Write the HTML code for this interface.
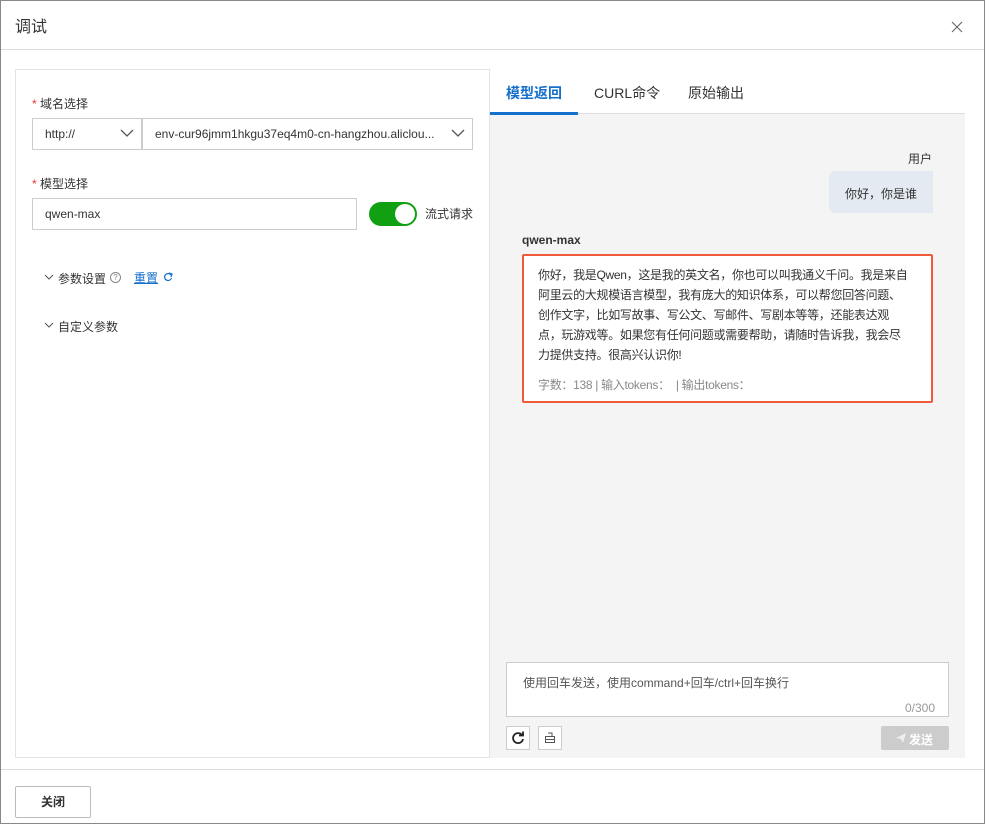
<!DOCTYPE html>
<html><head><meta charset="utf-8"><style>
*{box-sizing:border-box;margin:0;padding:0}
body{width:985px;height:824px;position:relative;background:#fff;font-family:"Liberation Sans","Noto Sans CJK SC",sans-serif;color:#333;font-size:12px;overflow:hidden}
.a{position:absolute}
.frame{left:0;top:0;width:985px;height:824px;border:1px solid #888}
</style></head><body>
<div class="a frame"></div>
<div class="a" style="left:15px;top:13px;font-size:16px;color:#333">调试</div>
<svg class="a" style="left:951px;top:21px" width="12" height="12"><path d="M1 1l10 10M11 1L1 11" stroke="#666" stroke-width="1.1"/></svg>
<div class="a" style="left:1px;top:49px;width:983px;height:1px;background:#ddd"></div>

<div class="a" style="left:15px;top:69px;width:475px;height:689px;border:1px solid #e3e3e3"></div>
<div class="a" style="left:32px;top:95px;font-size:12px"><span style="color:#e33">*</span> 域名选择</div>
<div class="a" style="left:32px;top:118px;width:110px;height:32px;border:1px solid #ccc;padding:8px 12px;font-size:12px">http://</div>
<svg class="a" style="left:120px;top:129px" width="14" height="9"><path d="M1 1l6 6 6-6" stroke="#555" fill="none" stroke-width="1.3"/></svg>
<div class="a" style="left:142px;top:118px;width:331px;height:32px;border:1px solid #ccc;padding:8px 12px;font-size:12px">env-cur96jmm1hkgu37eq4m0-cn-hangzhou.aliclou...</div>
<svg class="a" style="left:451px;top:129px" width="14" height="9"><path d="M1 1l6 6 6-6" stroke="#555" fill="none" stroke-width="1.3"/></svg>
<div class="a" style="left:32px;top:175px"><span style="color:#e33">*</span> 模型选择</div>
<div class="a" style="left:32px;top:198px;width:325px;height:32px;border:1px solid #ccc;padding:8px 12px">qwen-max</div>
<div class="a" style="left:369px;top:202px;width:48px;height:24px;border-radius:12px;background:#11a011"></div>
<div class="a" style="left:395px;top:204px;width:20px;height:20px;border-radius:10px;background:#fff"></div>
<div class="a" style="left:425px;top:205px">流式请求</div>
<svg class="a" style="left:44px;top:274px" width="10" height="7"><path d="M1 1l4 4 4-4" stroke="#555" fill="none"/></svg>
<div class="a" style="left:58px;top:270px">参数设置</div>
<div class="a" style="left:110px;top:272px;width:11px;height:11px;border:1px solid #888;border-radius:50%;font-size:8px;text-align:center;line-height:9px;color:#888">?</div>
<div class="a" style="left:134px;top:269px;color:#1470cc;font-size:12px;text-decoration:underline">重置</div>
<svg class="a" style="left:163px;top:272px" width="10" height="10"><path d="M8 3A3.5 3.5 0 1 0 8.5 6" stroke="#1470cc" fill="none" stroke-width="1.2"/><path d="M6 1l3 1-1 3" stroke="#1470cc" fill="none" stroke-width="1.2"/></svg>
<svg class="a" style="left:44px;top:322px" width="10" height="7"><path d="M1 1l4 4 4-4" stroke="#555" fill="none"/></svg>
<div class="a" style="left:58px;top:318px">自定义参数</div>

<div class="a" style="left:490px;top:114px;width:475px;height:644px;background:#f4f4f4"></div>
<div class="a" style="left:490px;top:113px;width:475px;height:1px;background:#ddd"></div>
<div class="a" style="left:490px;top:112px;width:88px;height:3px;background:#1470cc"></div>
<div class="a" style="left:506px;top:83px;font-size:14px;color:#1470cc;font-weight:bold">模型返回</div>
<div class="a" style="left:594px;top:83px;font-size:14px;color:#333">CURL命令</div>
<div class="a" style="left:688px;top:83px;font-size:14px;color:#333">原始输出</div>
<div class="a" style="left:908px;top:150px">用户</div>
<div class="a" style="left:829px;top:171px;width:104px;height:42px;background:#e3eaf2;border-radius:6px 0 0 6px;padding:14px 0 0 16px">你好，你是谁</div>
<div class="a" style="left:522px;top:233px;font-weight:bold;font-size:12px">qwen-max</div>
<div class="a" style="left:522px;top:254px;width:411px;height:149px;border:2px solid #ef5a3a;background:#fff;border-radius:2px;padding:9px 4px 0 14px;line-height:20px;font-size:12px;color:#333;white-space:nowrap;letter-spacing:-0.3px">你好，我是Qwen，这是我的英文名，你也可以叫我通义千问。我是来自<br>阿里云的大规模语言模型，我有庞大的知识体系，可以帮您回答问题、<br>创作文字，比如写故事、写公文、写邮件、写剧本等等，还能表达观<br>点，玩游戏等。如果您有任何问题或需要帮助，请随时告诉我，我会尽<br>力提供支持。很高兴认识你!
<div style="margin-top:10px;color:#888">字数：138 | 输入tokens：&nbsp; | 输出tokens：</div></div>

<div class="a" style="left:506px;top:662px;width:443px;height:55px;border:1px solid #ccc;background:#fff"></div>
<div class="a" style="left:523px;top:674px;color:#555">使用回车发送，使用command+回车/ctrl+回车换行</div>
<div class="a" style="left:905px;top:701px;color:#999">0/300</div>
<div class="a" style="left:506px;top:726px;width:24px;height:24px;border:1px solid #ccc;background:#fff"></div>
<svg class="a" style="left:511px;top:731px" width="14" height="14"><path d="M11 4A5 5 0 1 0 12 8" stroke="#222" fill="none" stroke-width="1.8"/><path d="M8 2.5h4v-4" stroke="#222" fill="none" stroke-width="1.8" transform="translate(0,2)"/></svg>
<div class="a" style="left:538px;top:726px;width:24px;height:24px;border:1px solid #ccc;background:#fff"></div>
<svg class="a" style="left:544px;top:732px" width="12" height="12"><path d="M4 1h4v3M1.5 4.5h9v6h-9zM1.5 7.5h9" stroke="#555" fill="none"/></svg>
<div class="a" style="left:881px;top:726px;width:68px;height:24px;background:#ccc;border-radius:2px;color:#fff;font-weight:bold;padding:5px 0 0 28px;font-size:12px">发送</div>
<svg class="a" style="left:895px;top:732px" width="12" height="12"><path d="M1 6l10-5-3 10-2-4z" fill="#eee"/></svg>

<div class="a" style="left:1px;top:769px;width:983px;height:1px;background:#ddd"></div>
<div class="a" style="left:15px;top:786px;width:76px;height:32px;border:1px solid #bbb;border-radius:2px;text-align:center;line-height:30px;font-weight:bold;font-size:12px">关闭</div>
</body></html>
